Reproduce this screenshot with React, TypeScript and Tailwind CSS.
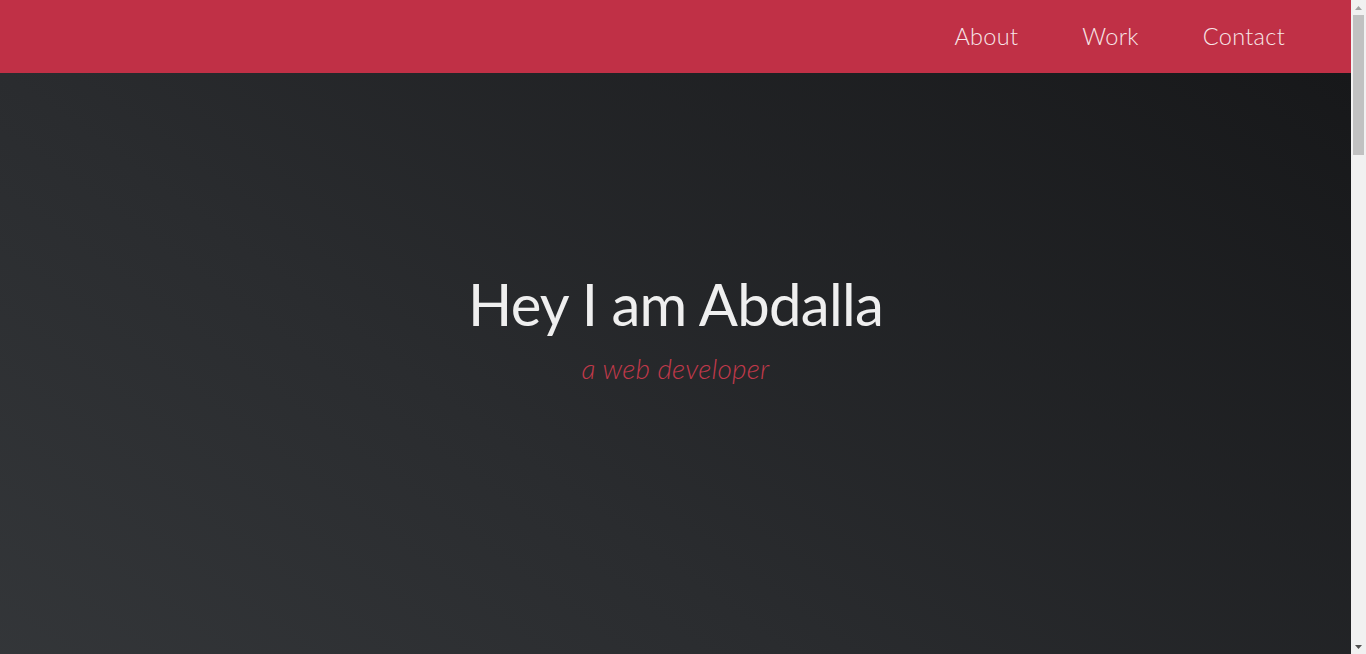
export default function App() {
  const links = ["About", "Work", "Contact"];

  return (
    <div className="h-screen flex bg-[#1f2022] font-['Lato','Open_Sans',sans-serif]">
      <div className="flex-1 overflow-hidden">
        {/* Header */}
        <header className="h-[73px] bg-[#c03046] flex items-center justify-end pr-[34px]">
          <nav className="flex items-center">
            {links.map((l) => (
              <a
                key={l}
                href={`#${l.toLowerCase()}`}
                className="px-8 text-[23.5px] font-light text-[#f7e6e8] tracking-[0.3px]"
              >
                {l}
              </a>
            ))}
          </nav>
        </header>

        {/* Hero */}
        <section className="h-[1000px] bg-linear-to-tr from-[#3a3d40] via-[#2a2c2f] to-[#17181a] flex flex-col items-center pt-[202px]">
          <h1 className="text-[58px] font-normal text-[#efefef] leading-none tracking-[-0.7px]">
            Hey I am Abdalla
          </h1>
          <p className="mt-[14px] text-[28px] italic font-light text-[#c0394a] tracking-[0.2px]">a web developer</p>
        </section>

        <section id="about" className="h-[640px] bg-[#1f2022]" />
        <section id="work" className="h-[640px] bg-[#1f2022]" />
        <section id="contact" className="h-[600px] bg-[#1f2022]" />
      </div>

      {/* scrollbar */}
      <div className="w-[15px] bg-[#f1f1f1] flex flex-col">
        <div className="h-[15px] flex items-center justify-center">
          <svg width="7" height="4" viewBox="0 0 7 4">
            <path d="M3.5 0 L7 4 L0 4 Z" fill="#a3a3a3" />
          </svg>
        </div>
        <div className="flex-1 px-[2px]">
          <div className="h-[140px] bg-[#c1c1c1]" />
        </div>
        <div className="h-[15px] flex items-center justify-center">
          <svg width="7" height="4" viewBox="0 0 7 4">
            <path d="M0 0 L7 0 L3.5 4 Z" fill="#505050" />
          </svg>
        </div>
      </div>
    </div>
  );
}
